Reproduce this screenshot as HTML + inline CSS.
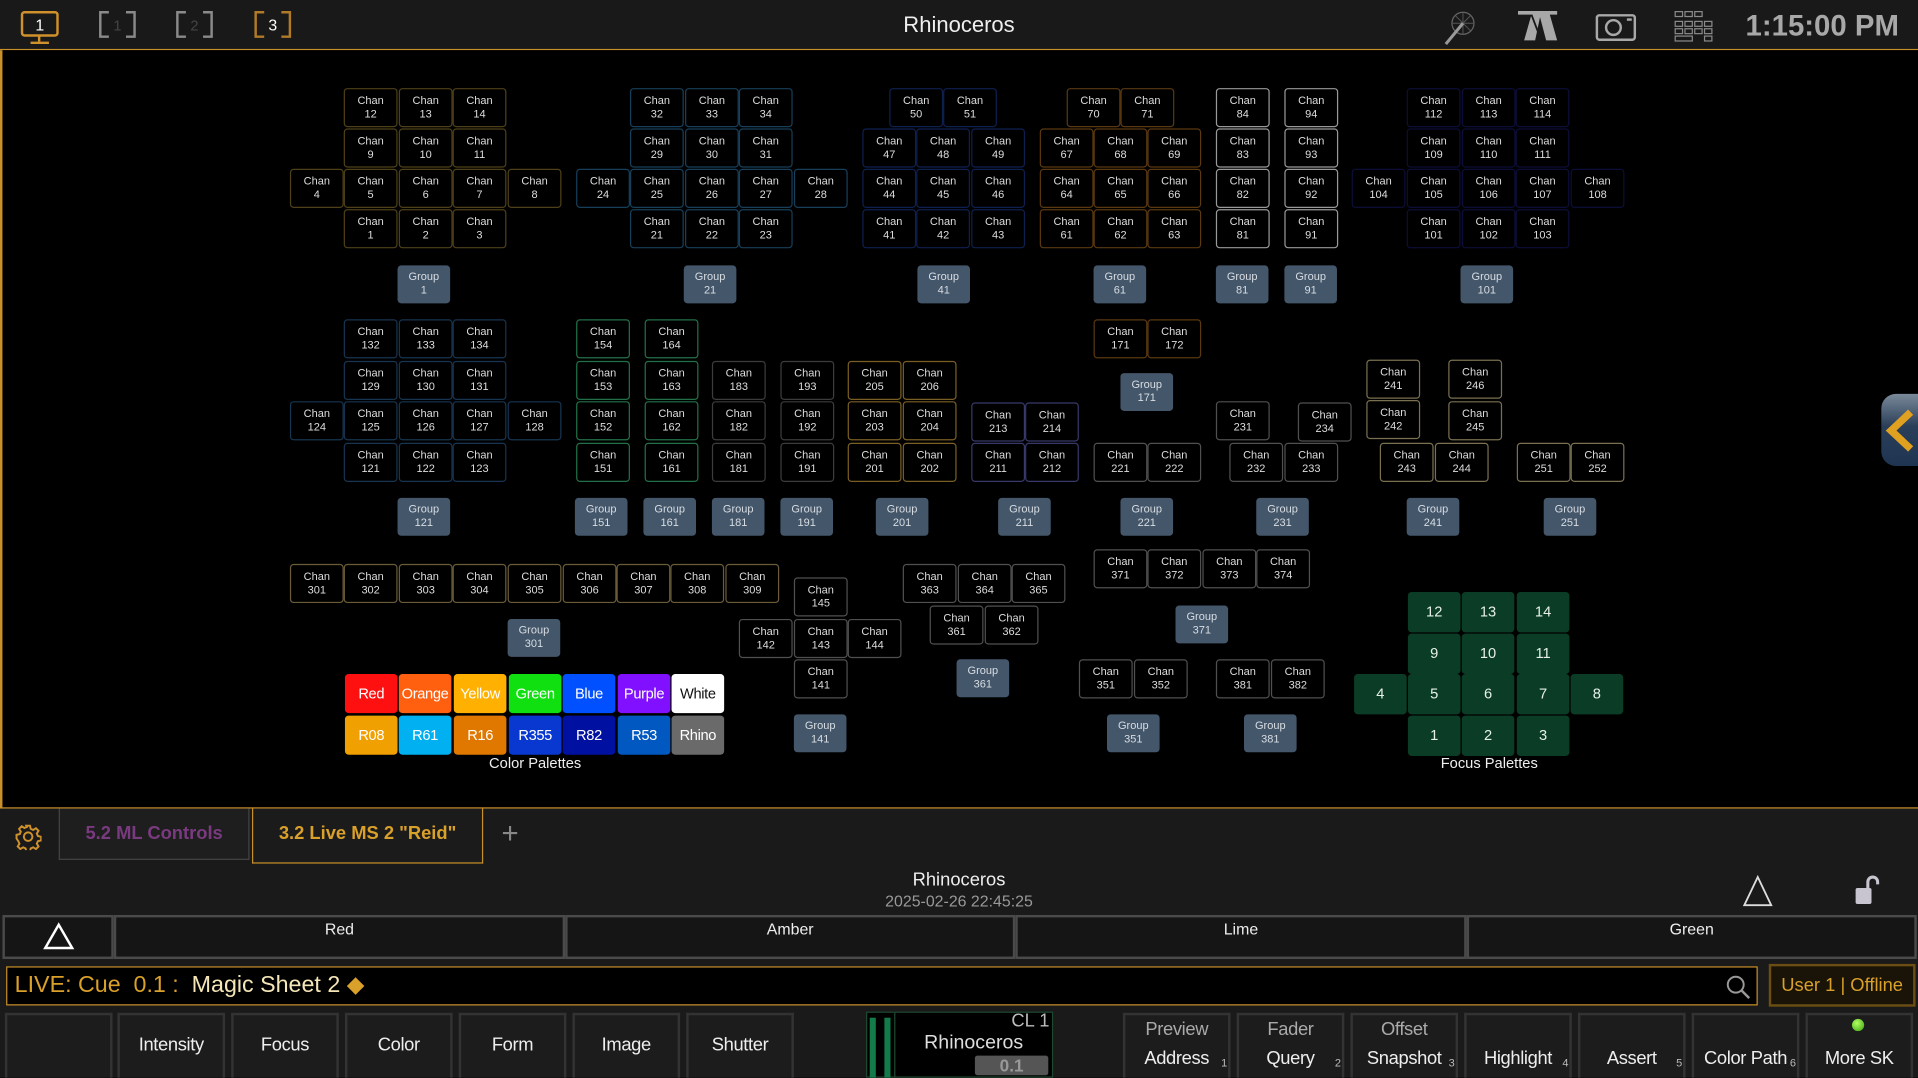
<!DOCTYPE html>
<html><head><meta charset="utf-8"><style>
*{margin:0;padding:0;box-sizing:border-box}
html,body{width:1918px;height:1078px;overflow:hidden;background:#000}
#s{position:absolute;left:0;top:0;width:1568px;height:881px;transform:scale(1.22321);transform-origin:0 0;font-family:"Liberation Sans Narrow","Liberation Sans",sans-serif;color:#e8e8e8;background:#1a1a1a}
.a{position:absolute}
#top{left:0;top:0;width:1568px;height:41px;background:#191919;border-bottom:1px solid #c8902a}
#main{left:0;top:41px;width:1568px;height:620px;background:#000;border-left:2px solid #c8902a;border-bottom:1px solid #c8902a}
.c{position:absolute;width:44px;height:32px;border:1px solid #4e4018;border-radius:3px;font-size:9px;line-height:11px;text-align:center;padding-top:4px;color:#ddd;background:#000}
.g{position:absolute;width:43px;height:31px;background:#44566a;border-radius:3px;font-size:9px;line-height:11px;text-align:center;padding-top:4px;color:#d8dde3}
.p{position:absolute;width:43px;height:32px;border-radius:3px;font-size:12px;line-height:32px;text-align:center;color:#fff;letter-spacing:-0.3px}
.f{position:absolute;width:43px;height:33px;border-radius:3px;font-size:12px;line-height:33px;text-align:center;color:#e6efe9;background:#0b3d26}
.bB{border-color:#173f5a}.bC{border-color:#0e2050}.bD{border-color:#5a3810}.bE{border-color:#999}.bG{border-color:#0c0e38}
.bH{border-color:#173450}.bI{border-color:#237048}.bJ{border-color:#3c3c3c}.bK{border-color:#7a5e24}.bL{border-color:#38386a}.bM{border-color:#7a7050}.bN{border-color:#505050}.bO{border-color:#6a5c38}
.sk{position:absolute;top:828px;width:88px;height:53px;background:#1c1c1c;border:2px solid #333;border-bottom:none;font-size:15px;text-align:center;color:#eee;letter-spacing:-0.3px}
.fd{position:absolute;top:748px;height:36px;background:#151515;border:2px solid #4a4a4a;font-size:13px;text-align:center;padding-top:2px;color:#eee}
.n{position:absolute;right:1px;bottom:0;font-size:9px;color:#bbb}
</style></head><body><div id="s">
<div id="top" class="a">
 <svg class="a" style="left:16px;top:8px" width="34" height="30" viewBox="0 0 34 30"><rect x="2" y="2" width="29" height="19" rx="2" fill="none" stroke="#d0912c" stroke-width="2"/><line x1="16" y1="21" x2="16" y2="26" stroke="#d0912c" stroke-width="2"/><line x1="9" y1="27" x2="24" y2="27" stroke="#d0912c" stroke-width="2"/><text x="16.5" y="17" font-size="13" fill="#fff" text-anchor="middle" font-family="Liberation Sans">1</text></svg>
 <svg class="a" style="left:80px;top:8px" width="32" height="24" viewBox="0 0 32 24"><path d="M9 2H2V22H9M23 2H30V22H23" fill="none" stroke="#8a8a8a" stroke-width="2"/><text x="16" y="17" font-size="12" fill="#444" text-anchor="middle" font-family="Liberation Sans">1</text></svg>
 <svg class="a" style="left:143px;top:8px" width="32" height="24" viewBox="0 0 32 24"><path d="M9 2H2V22H9M23 2H30V22H23" fill="none" stroke="#8a8a8a" stroke-width="2"/><text x="16" y="17" font-size="12" fill="#444" text-anchor="middle" font-family="Liberation Sans">2</text></svg>
 <svg class="a" style="left:207px;top:8px" width="32" height="24" viewBox="0 0 32 24"><path d="M9 2H2V22H9M23 2H30V22H23" fill="none" stroke="#b07a28" stroke-width="2"/><text x="16" y="17" font-size="13" fill="#fff" text-anchor="middle" font-family="Liberation Sans">3</text></svg>
 <div class="a" style="left:684px;top:10px;width:200px;text-align:center;font-size:18px;color:#eee">Rhinoceros</div>
 <svg class="a" style="left:1178px;top:8px" width="30" height="30" viewBox="0 0 30 30"><circle cx="18" cy="11" r="9" fill="none" stroke="#666" stroke-width="1"/><path d="M18 2V20M9 11H27M12 5L24 17M24 5L12 17" stroke="#555" stroke-width="0.8"/><line x1="4" y1="28" x2="18" y2="11" stroke="#999" stroke-width="2.5"/></svg>
 <svg class="a" style="left:1240px;top:8px" width="34" height="26" viewBox="0 0 34 26"><path d="M1 1H33V4H27L33 25H24L19 6L15 25H6L12 4H1Z" fill="#a8a8a8"/><path d="M12 4L20 25" stroke="#191919" stroke-width="1.5"/></svg>
 <svg class="a" style="left:1304px;top:10px" width="34" height="26" viewBox="0 0 34 26"><rect x="1.5" y="2.5" width="31" height="20" rx="2" fill="none" stroke="#a8a8a8" stroke-width="2"/><circle cx="15" cy="12.5" r="6" fill="none" stroke="#a8a8a8" stroke-width="2"/><rect x="26" y="5" width="4" height="2" fill="#a8a8a8"/></svg>
 <svg class="a" style="left:1368px;top:8px" width="34" height="28" viewBox="0 0 34 28"><g fill="none" stroke="#8a8a8a" stroke-width="1"><rect x="1.5" y="1.5" width="6" height="4"/><rect x="9.5" y="1.5" width="6" height="4"/><rect x="17.5" y="1.5" width="6" height="4"/><rect x="1.5" y="9.5" width="6" height="4"/><rect x="9.5" y="9.5" width="6" height="4"/><rect x="17.5" y="9.5" width="6" height="4"/><rect x="25.5" y="9.5" width="6" height="4"/><rect x="1.5" y="15.5" width="6" height="4"/><rect x="9.5" y="15.5" width="6" height="4"/><rect x="17.5" y="15.5" width="6" height="4"/><rect x="25.5" y="15.5" width="6" height="4"/><rect x="1.5" y="21.5" width="14" height="4"/><rect x="25.5" y="21.5" width="6" height="4"/></g></svg>
 <div class="a" style="left:1427px;top:8px;font-size:24px;font-weight:bold;color:#a8a8a8;font-family:'Liberation Sans',sans-serif">1:15:00 PM</div>
</div>
<div id="main" class="a"></div>
<div class="c" style="left:281px;top:72px">Chan<br>12</div><div class="c" style="left:326px;top:72px">Chan<br>13</div><div class="c" style="left:370px;top:72px">Chan<br>14</div>
<div class="c" style="left:281px;top:105px">Chan<br>9</div><div class="c" style="left:326px;top:105px">Chan<br>10</div><div class="c" style="left:370px;top:105px">Chan<br>11</div>
<div class="c" style="left:237px;top:138px">Chan<br>4</div><div class="c" style="left:281px;top:138px">Chan<br>5</div><div class="c" style="left:326px;top:138px">Chan<br>6</div><div class="c" style="left:370px;top:138px">Chan<br>7</div><div class="c" style="left:415px;top:138px">Chan<br>8</div>
<div class="c" style="left:281px;top:171px">Chan<br>1</div><div class="c" style="left:326px;top:171px">Chan<br>2</div><div class="c" style="left:370px;top:171px">Chan<br>3</div>
<div class="g" style="left:325px;top:217px">Group<br>1</div>
<div class="c bB" style="left:515px;top:72px">Chan<br>32</div><div class="c bB" style="left:560px;top:72px">Chan<br>33</div><div class="c bB" style="left:604px;top:72px">Chan<br>34</div>
<div class="c bB" style="left:515px;top:105px">Chan<br>29</div><div class="c bB" style="left:560px;top:105px">Chan<br>30</div><div class="c bB" style="left:604px;top:105px">Chan<br>31</div>
<div class="c bB" style="left:471px;top:138px">Chan<br>24</div><div class="c bB" style="left:515px;top:138px">Chan<br>25</div><div class="c bB" style="left:560px;top:138px">Chan<br>26</div><div class="c bB" style="left:604px;top:138px">Chan<br>27</div><div class="c bB" style="left:649px;top:138px">Chan<br>28</div>
<div class="c bB" style="left:515px;top:171px">Chan<br>21</div><div class="c bB" style="left:560px;top:171px">Chan<br>22</div><div class="c bB" style="left:604px;top:171px">Chan<br>23</div>
<div class="g" style="left:559px;top:217px">Group<br>21</div>
<div class="c bC" style="left:727px;top:72px">Chan<br>50</div><div class="c bC" style="left:771px;top:72px">Chan<br>51</div>
<div class="c bC" style="left:705px;top:105px">Chan<br>47</div><div class="c bC" style="left:749px;top:105px">Chan<br>48</div><div class="c bC" style="left:794px;top:105px">Chan<br>49</div>
<div class="c bC" style="left:705px;top:138px">Chan<br>44</div><div class="c bC" style="left:749px;top:138px">Chan<br>45</div><div class="c bC" style="left:794px;top:138px">Chan<br>46</div>
<div class="c bC" style="left:705px;top:171px">Chan<br>41</div><div class="c bC" style="left:749px;top:171px">Chan<br>42</div><div class="c bC" style="left:794px;top:171px">Chan<br>43</div>
<div class="g" style="left:750px;top:217px">Group<br>41</div>
<div class="c bD" style="left:872px;top:72px">Chan<br>70</div><div class="c bD" style="left:916px;top:72px">Chan<br>71</div>
<div class="c bD" style="left:850px;top:105px">Chan<br>67</div><div class="c bD" style="left:894px;top:105px">Chan<br>68</div><div class="c bD" style="left:938px;top:105px">Chan<br>69</div>
<div class="c bD" style="left:850px;top:138px">Chan<br>64</div><div class="c bD" style="left:894px;top:138px">Chan<br>65</div><div class="c bD" style="left:938px;top:138px">Chan<br>66</div>
<div class="c bD" style="left:850px;top:171px">Chan<br>61</div><div class="c bD" style="left:894px;top:171px">Chan<br>62</div><div class="c bD" style="left:938px;top:171px">Chan<br>63</div>
<div class="g" style="left:894px;top:217px">Group<br>61</div>
<div class="c bE" style="left:994px;top:72px">Chan<br>84</div><div class="c bE" style="left:994px;top:105px">Chan<br>83</div><div class="c bE" style="left:994px;top:138px">Chan<br>82</div><div class="c bE" style="left:994px;top:171px">Chan<br>81</div>
<div class="g" style="left:994px;top:217px">Group<br>81</div>
<div class="c bE" style="left:1050px;top:72px">Chan<br>94</div><div class="c bE" style="left:1050px;top:105px">Chan<br>93</div><div class="c bE" style="left:1050px;top:138px">Chan<br>92</div><div class="c bE" style="left:1050px;top:171px">Chan<br>91</div>
<div class="g" style="left:1050px;top:217px">Group<br>91</div>
<div class="c bG" style="left:1150px;top:72px">Chan<br>112</div><div class="c bG" style="left:1195px;top:72px">Chan<br>113</div><div class="c bG" style="left:1239px;top:72px">Chan<br>114</div>
<div class="c bG" style="left:1150px;top:105px">Chan<br>109</div><div class="c bG" style="left:1195px;top:105px">Chan<br>110</div><div class="c bG" style="left:1239px;top:105px">Chan<br>111</div>
<div class="c bG" style="left:1105px;top:138px">Chan<br>104</div><div class="c bG" style="left:1150px;top:138px">Chan<br>105</div><div class="c bG" style="left:1195px;top:138px">Chan<br>106</div><div class="c bG" style="left:1239px;top:138px">Chan<br>107</div><div class="c bG" style="left:1284px;top:138px">Chan<br>108</div>
<div class="c bG" style="left:1150px;top:171px">Chan<br>101</div><div class="c bG" style="left:1195px;top:171px">Chan<br>102</div><div class="c bG" style="left:1239px;top:171px">Chan<br>103</div>
<div class="g" style="left:1194px;top:217px">Group<br>101</div>
<div class="c bH" style="left:281px;top:261px">Chan<br>132</div><div class="c bH" style="left:326px;top:261px">Chan<br>133</div><div class="c bH" style="left:370px;top:261px">Chan<br>134</div>
<div class="c bH" style="left:281px;top:295px">Chan<br>129</div><div class="c bH" style="left:326px;top:295px">Chan<br>130</div><div class="c bH" style="left:370px;top:295px">Chan<br>131</div>
<div class="c bH" style="left:237px;top:328px">Chan<br>124</div><div class="c bH" style="left:281px;top:328px">Chan<br>125</div><div class="c bH" style="left:326px;top:328px">Chan<br>126</div><div class="c bH" style="left:370px;top:328px">Chan<br>127</div><div class="c bH" style="left:415px;top:328px">Chan<br>128</div>
<div class="c bH" style="left:281px;top:362px">Chan<br>121</div><div class="c bH" style="left:326px;top:362px">Chan<br>122</div><div class="c bH" style="left:370px;top:362px">Chan<br>123</div>
<div class="g" style="left:325px;top:407px">Group<br>121</div>
<div class="c bI" style="left:471px;top:261px">Chan<br>154</div><div class="c bI" style="left:471px;top:295px">Chan<br>153</div><div class="c bI" style="left:471px;top:328px">Chan<br>152</div><div class="c bI" style="left:471px;top:362px">Chan<br>151</div>
<div class="g" style="left:470px;top:407px">Group<br>151</div>
<div class="c bI" style="left:527px;top:261px">Chan<br>164</div><div class="c bI" style="left:527px;top:295px">Chan<br>163</div><div class="c bI" style="left:527px;top:328px">Chan<br>162</div><div class="c bI" style="left:527px;top:362px">Chan<br>161</div>
<div class="g" style="left:526px;top:407px">Group<br>161</div>
<div class="c bJ" style="left:582px;top:295px">Chan<br>183</div><div class="c bJ" style="left:582px;top:328px">Chan<br>182</div><div class="c bJ" style="left:582px;top:362px">Chan<br>181</div>
<div class="g" style="left:582px;top:407px">Group<br>181</div>
<div class="c bJ" style="left:638px;top:295px">Chan<br>193</div><div class="c bJ" style="left:638px;top:328px">Chan<br>192</div><div class="c bJ" style="left:638px;top:362px">Chan<br>191</div>
<div class="g" style="left:638px;top:407px">Group<br>191</div>
<div class="c bK" style="left:693px;top:295px">Chan<br>205</div><div class="c bK" style="left:738px;top:295px">Chan<br>206</div>
<div class="c bK" style="left:693px;top:328px">Chan<br>203</div><div class="c bK" style="left:738px;top:328px">Chan<br>204</div>
<div class="c bK" style="left:693px;top:362px">Chan<br>201</div><div class="c bK" style="left:738px;top:362px">Chan<br>202</div>
<div class="g" style="left:716px;top:407px">Group<br>201</div>
<div class="c bL" style="left:794px;top:329px">Chan<br>213</div><div class="c bL" style="left:838px;top:329px">Chan<br>214</div>
<div class="c bL" style="left:794px;top:362px">Chan<br>211</div><div class="c bL" style="left:838px;top:362px">Chan<br>212</div>
<div class="g" style="left:816px;top:407px">Group<br>211</div>
<div class="c bD" style="left:894px;top:261px">Chan<br>171</div><div class="c bD" style="left:938px;top:261px">Chan<br>172</div>
<div class="g" style="left:916px;top:305px">Group<br>171</div>
<div class="c bN" style="left:894px;top:362px">Chan<br>221</div><div class="c bN" style="left:938px;top:362px">Chan<br>222</div>
<div class="g" style="left:916px;top:407px">Group<br>221</div>
<div class="c bN" style="left:994px;top:328px">Chan<br>231</div><div class="c bN" style="left:1061px;top:329px">Chan<br>234</div>
<div class="c bN" style="left:1005px;top:362px">Chan<br>232</div><div class="c bN" style="left:1050px;top:362px">Chan<br>233</div>
<div class="g" style="left:1027px;top:407px">Group<br>231</div>
<div class="c bM" style="left:1117px;top:294px">Chan<br>241</div><div class="c bM" style="left:1184px;top:294px">Chan<br>246</div>
<div class="c bM" style="left:1117px;top:327px">Chan<br>242</div><div class="c bM" style="left:1184px;top:328px">Chan<br>245</div>
<div class="c bM" style="left:1128px;top:362px">Chan<br>243</div><div class="c bM" style="left:1173px;top:362px">Chan<br>244</div>
<div class="g" style="left:1150px;top:407px">Group<br>241</div>
<div class="c bM" style="left:1240px;top:362px">Chan<br>251</div><div class="c bM" style="left:1284px;top:362px">Chan<br>252</div>
<div class="g" style="left:1262px;top:407px">Group<br>251</div>
<div class="c bO" style="left:237px;top:461px">Chan<br>301</div><div class="c bO" style="left:281px;top:461px">Chan<br>302</div><div class="c bO" style="left:326px;top:461px">Chan<br>303</div><div class="c bO" style="left:370px;top:461px">Chan<br>304</div><div class="c bO" style="left:415px;top:461px">Chan<br>305</div><div class="c bO" style="left:460px;top:461px">Chan<br>306</div><div class="c bO" style="left:504px;top:461px">Chan<br>307</div><div class="c bO" style="left:548px;top:461px">Chan<br>308</div><div class="c bO" style="left:593px;top:461px">Chan<br>309</div>
<div class="g" style="left:415px;top:506px">Group<br>301</div>
<div class="c bN" style="left:649px;top:472px">Chan<br>145</div>
<div class="c bN" style="left:604px;top:506px">Chan<br>142</div><div class="c bN" style="left:649px;top:506px">Chan<br>143</div><div class="c bN" style="left:693px;top:506px">Chan<br>144</div>
<div class="c bN" style="left:649px;top:539px">Chan<br>141</div>
<div class="g" style="left:649px;top:584px">Group<br>141</div>
<div class="c bN" style="left:738px;top:461px">Chan<br>363</div><div class="c bN" style="left:783px;top:461px">Chan<br>364</div><div class="c bN" style="left:827px;top:461px">Chan<br>365</div>
<div class="c bN" style="left:760px;top:495px">Chan<br>361</div><div class="c bN" style="left:805px;top:495px">Chan<br>362</div>
<div class="g" style="left:782px;top:539px">Group<br>361</div>
<div class="c bN" style="left:894px;top:449px">Chan<br>371</div><div class="c bN" style="left:938px;top:449px">Chan<br>372</div><div class="c bN" style="left:983px;top:449px">Chan<br>373</div><div class="c bN" style="left:1027px;top:449px">Chan<br>374</div>
<div class="g" style="left:961px;top:495px">Group<br>371</div>
<div class="c bN" style="left:882px;top:539px">Chan<br>351</div><div class="c bN" style="left:927px;top:539px">Chan<br>352</div>
<div class="g" style="left:905px;top:584px">Group<br>351</div>
<div class="c bN" style="left:994px;top:539px">Chan<br>381</div><div class="c bN" style="left:1039px;top:539px">Chan<br>382</div>
<div class="g" style="left:1017px;top:584px">Group<br>381</div>
<div class="p" style="left:282px;top:551px;background:#ff1010">Red</div><div class="p" style="left:326px;top:551px;background:#ff6010">Orange</div><div class="p" style="left:371px;top:551px;background:#ffb000">Yellow</div><div class="p" style="left:416px;top:551px;background:#10e010">Green</div><div class="p" style="left:460px;top:551px;background:#0050ff">Blue</div><div class="p" style="left:505px;top:551px;background:#8010ff">Purple</div><div class="p" style="left:549px;top:551px;background:#fff;color:#111">White</div>
<div class="p" style="left:282px;top:585px;background:#f0a000">R08</div><div class="p" style="left:326px;top:585px;background:#00b0f0">R61</div><div class="p" style="left:371px;top:585px;background:#e07800">R16</div><div class="p" style="left:416px;top:585px;background:#0838d0">R355</div><div class="p" style="left:460px;top:585px;background:#0010a0">R82</div><div class="p" style="left:505px;top:585px;background:#0058c0">R53</div><div class="p" style="left:549px;top:585px;background:#6a6a6a">Rhino</div>
<div class="a" style="left:380px;top:617px;width:115px;text-align:center;font-size:12px;color:#eee">Color Palettes</div>
<div class="f" style="left:1151px;top:484px">12</div><div class="f" style="left:1195px;top:484px">13</div><div class="f" style="left:1240px;top:484px">14</div>
<div class="f" style="left:1151px;top:518px">9</div><div class="f" style="left:1195px;top:518px">10</div><div class="f" style="left:1240px;top:518px">11</div>
<div class="f" style="left:1107px;top:551px">4</div><div class="f" style="left:1151px;top:551px">5</div><div class="f" style="left:1195px;top:551px">6</div><div class="f" style="left:1240px;top:551px">7</div><div class="f" style="left:1284px;top:551px">8</div>
<div class="f" style="left:1151px;top:585px">1</div><div class="f" style="left:1195px;top:585px">2</div><div class="f" style="left:1240px;top:585px">3</div>
<div class="a" style="left:1160px;top:617px;width:115px;text-align:center;font-size:12px;color:#eee">Focus Palettes</div>
<div class="a" style="left:1538px;top:322px;width:30px;height:59px;border-radius:12px 0 0 12px;background:linear-gradient(#7a8a9a,#2a3e58 45%,#1e3552)"></div>
<svg class="a" style="left:1540px;top:334px" width="28" height="36" viewBox="0 0 28 36"><path d="M22 3L6 18L22 33" fill="none" stroke="#e0a020" stroke-width="6"/></svg>
<svg class="a" style="left:12px;top:673px" width="22" height="22" viewBox="0 0 22 22"><g fill="none" stroke="#d0912c" stroke-width="1.6"><circle cx="11" cy="11" r="3.5"/><path d="M9.5 2h3l.6 2.6 2 .9 2.3-1.4 2.1 2.1-1.4 2.3.9 2 2.6.6v3l-2.6.6-.9 2 1.4 2.3-2.1 2.1-2.3-1.4-2 .9-.6 2.6h-3l-.6-2.6-2-.9-2.3 1.4-2.1-2.1 1.4-2.3-.9-2L1.5 12.5v-3l2.6-.6.9-2-1.4-2.3 2.1-2.1 2.3 1.4 2-.9z"/></g></svg>
<div class="a" style="left:48px;top:661px;width:156px;height:42px;background:#1e1e1e;border:1px solid #444;border-top:none;color:#7a3a80;font-size:15px;font-weight:bold;text-align:center;line-height:42px">5.2 ML Controls</div>
<div class="a" style="left:206px;top:661px;width:189px;height:45px;background:#1b1b1b;border:1px solid #c8902a;border-top:none;color:#d9a02a;font-size:15px;font-weight:bold;text-align:center;line-height:42px">3.2 Live MS 2 "Reid"</div>
<div class="a" style="left:410px;top:668px;font-size:24px;color:#888;font-family:'Liberation Sans',sans-serif">+</div>
<div class="a" style="left:684px;top:711px;width:200px;text-align:center;font-size:15px;color:#eee">Rhinoceros</div>
<div class="a" style="left:684px;top:729px;width:200px;text-align:center;font-size:13px;color:#999">2025-02-26 22:45:25</div>
<svg class="a" style="left:1423px;top:714px" width="28" height="28" viewBox="0 0 28 28"><path d="M14 3L25 26H3Z" fill="none" stroke="#ddd" stroke-width="1.5"/></svg>
<svg class="a" style="left:1508px;top:712px" width="30" height="30" viewBox="0 0 30 30"><path d="M19 15V9a4 4 0 0 1 8 0v2" fill="none" stroke="#c8c4d0" stroke-width="2.5"/><rect x="9" y="14" width="13" height="13" rx="1.5" fill="#c8c4d0"/></svg>
<div class="fd" style="left:2px;width:91px"><svg width="30" height="26" viewBox="0 0 30 26"><path d="M15 4L26 23H4Z" fill="none" stroke="#fff" stroke-width="2"/></svg></div>
<div class="fd" style="left:93px;width:369px">Red</div>
<div class="fd" style="left:462px;width:368px">Amber</div>
<div class="fd" style="left:830px;width:369px">Lime</div>
<div class="fd" style="left:1199px;width:368px">Green</div>
<div class="a" style="left:5px;top:790px;width:1432px;height:32px;background:#000;border:1px solid #c8902a;font-size:19px;line-height:30px;padding-left:6px;color:#d9a02a">LIVE: Cue&nbsp; 0.1 :&nbsp; <span style="color:#f5e6b8">Magic Sheet 2</span> <span style="color:#d9a02a">◆</span></div>
<svg class="a" style="left:1410px;top:796px" width="22" height="22" viewBox="0 0 22 22"><circle cx="9" cy="9" r="6.5" fill="none" stroke="#999" stroke-width="1.6"/><line x1="14" y1="14" x2="20" y2="20" stroke="#999" stroke-width="2"/></svg>
<div class="a" style="left:1446px;top:788px;width:120px;height:35px;background:#1a1408;border:2px solid #6a4e14;color:#d9a02a;font-size:15px;line-height:31px;text-align:center">User 1 | Offline</div>
<div class="sk" style="left:4px"></div>
<div class="sk" style="left:96px;line-height:50px">Intensity</div>
<div class="sk" style="left:189px;line-height:50px">Focus</div>
<div class="sk" style="left:282px;line-height:50px">Color</div>
<div class="sk" style="left:375px;line-height:50px">Form</div>
<div class="sk" style="left:468px;line-height:50px">Image</div>
<div class="sk" style="left:561px;line-height:50px">Shutter</div>
<div class="a" style="left:708px;top:827px;width:153px;height:54px;background:#000;border:1px solid #1f4a32"></div>
<div class="a" style="left:711px;top:832px;width:5px;height:49px;background:#137a4a"></div>
<div class="a" style="left:723px;top:832px;width:5px;height:49px;background:#137a4a"></div>
<div class="a" style="left:731px;top:828px;width:1px;height:53px;background:#1f4a32"></div>
<div class="a" style="left:800px;top:826px;width:58px;text-align:right;font-size:15px;color:#bbb">CL 1</div>
<div class="a" style="left:740px;top:844px;width:112px;text-align:center;font-size:16px;color:#ddd">Rhinoceros</div>
<div class="a" style="left:797px;top:863px;width:60px;height:16px;background:#555;border-radius:2px;font-size:14px;font-weight:bold;color:#999;text-align:center;line-height:16px;font-family:'Liberation Sans',sans-serif">0.1</div>
<div class="sk" style="left:918px;line-height:24px"><span style="color:#aaa">Preview</span><br>Address<span class="n">1</span></div>
<div class="sk" style="left:1011px;line-height:24px"><span style="color:#aaa">Fader</span><br>Query<span class="n">2</span></div>
<div class="sk" style="left:1104px;line-height:24px"><span style="color:#aaa">Offset</span><br>Snapshot<span class="n">3</span></div>
<div class="sk" style="left:1197px;line-height:24px"><br>Highlight<span class="n">4</span></div>
<div class="sk" style="left:1290px;line-height:24px"><br>Assert<span class="n">5</span></div>
<div class="sk" style="left:1383px;line-height:24px"><br>Color Path<span class="n">6</span></div>
<div class="sk" style="left:1476px;line-height:24px"><br>More SK</div>
<div class="a" style="left:1514px;top:833px;width:10px;height:10px;border-radius:50%;background:radial-gradient(circle at 40% 35%,#b0ff60,#3aa010)"></div>
</div></body></html>
